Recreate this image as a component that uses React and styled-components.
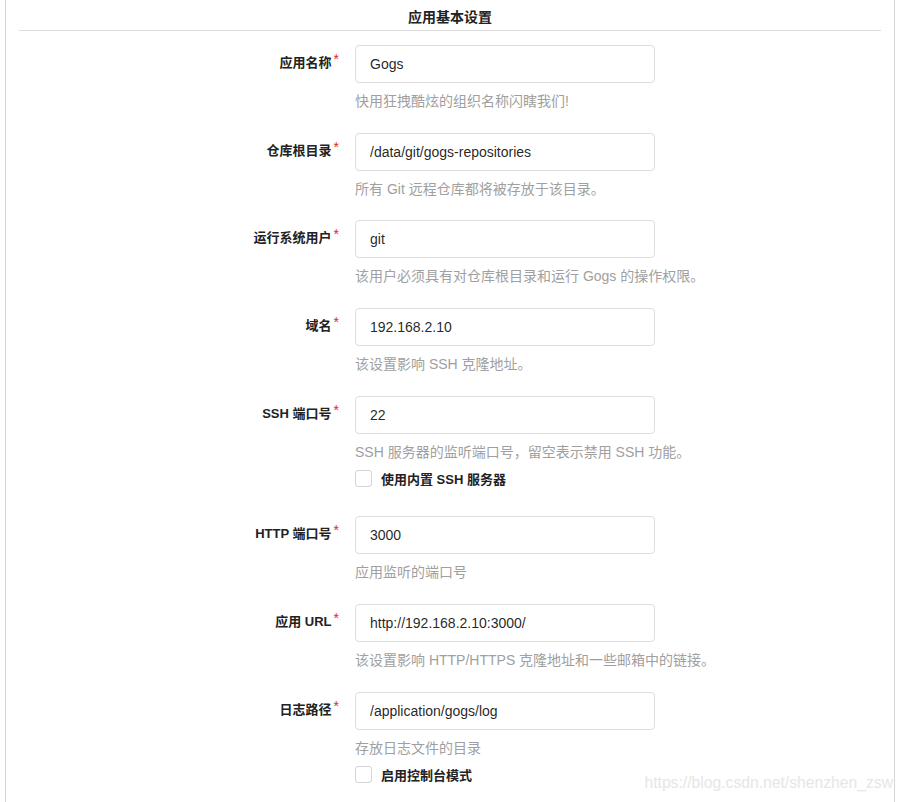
import React from 'react';
import styled, { createGlobalStyle } from 'styled-components';

const GlobalStyle = createGlobalStyle`
  body {
    margin: 0;
    background: #fff;
    font-family: "Liberation Sans", "Noto Sans CJK SC", sans-serif;
    color: rgba(0, 0, 0, 0.87);
  }
`;

const Page = styled.div`
  position: relative;
  height: 802px;
  overflow: hidden;
`;

const Panel = styled.div`
  margin: 0 8px 0 5px;
  border-left: 1px solid #d4d4d5;
  border-right: 1px solid #d4d4d5;
  min-height: 802px;
  padding: 0 13px;
`;

const Title = styled.h3`
  margin: 0;
  height: 30px;
  line-height: 34px;
  text-align: center;
  font-size: 14px;
  font-weight: bold;
  color: #222;
  border-bottom: 1px solid #dcdcdc;
`;

const Form = styled.div`
  padding-top: 14px;
`;

const Field = styled.div`
  display: grid;
  grid-template-columns: 321px 300px;
  column-gap: 15px;
  margin-bottom: ${p => p.$after || 22.7}px;
`;

const Label = styled.label`
  justify-self: end;
  align-self: start;
  padding-top: 7px;
  margin-right: 1px;
  font-size: 13px;
  font-weight: bold;
  color: #222;
  white-space: nowrap;
`;

const Star = styled.span`
  color: #db2828;
  margin-left: 2px;
  font-weight: normal;
  font-size: 14px;
  position: relative;
  top: -3px;
`;

const Control = styled.div`
  display: flex;
  flex-direction: column;
`;

const Input = styled.input`
  box-sizing: border-box;
  width: 300px;
  height: 38px;
  padding: 0 14px;
  border: 1px solid #dedede;
  border-radius: 4px;
  font-family: "Liberation Sans", "Noto Sans CJK SC", sans-serif;
  font-size: 14px;
  color: rgba(0, 0, 0, 0.87);
  outline: none;
`;

const Help = styled.span`
  margin-top: 9px;
  line-height: 18px;
  font-size: 14px;
  color: #a0a0a0;
  white-space: nowrap;
`;

const CheckRow = styled.label`
  display: flex;
  align-items: center;
  gap: 9px;
  margin-top: 8px;
  height: 20px;
  font-size: 13px;
  font-weight: bold;
  color: #222;
  white-space: nowrap;
`;

const Box = styled.span`
  box-sizing: border-box;
  width: 17px;
  height: 17px;
  border: 1px solid #d4d4d5;
  border-radius: 3px;
  background: #fff;
`;

const Watermark = styled.div`
  position: absolute;
  right: 10px;
  bottom: 10px;
  font-family: "Liberation Sans", sans-serif;
  font-size: 15.7px;
  color: #e6e6e6;
`;

const fields = [
  { label: '应用名称', value: 'Gogs', help: '快用狂拽酷炫的组织名称闪瞎我们!' },
  { label: '仓库根目录', value: '/data/git/gogs-repositories', help: '所有 Git 远程仓库都将被存放于该目录。' },
  { label: '运行系统用户', value: 'git', help: '该用户必须具有对仓库根目录和运行 Gogs 的操作权限。' },
  { label: '域名', value: '192.168.2.10', help: '该设置影响 SSH 克隆地址。' },
  { label: 'SSH 端口号', value: '22', help: 'SSH 服务器的监听端口号，留空表示禁用 SSH 功能。', check: '使用内置 SSH 服务器', after: 27.5 },
  { label: 'HTTP 端口号', value: '3000', help: '应用监听的端口号' },
  { label: '应用 URL', value: 'http://192.168.2.10:3000/', help: '该设置影响 HTTP/HTTPS 克隆地址和一些邮箱中的链接。' },
  { label: '日志路径', value: '/application/gogs/log', help: '存放日志文件的目录', check: '启用控制台模式' },
];

export default function App() {
  return (
    <Page>
      <GlobalStyle />
      <Panel>
        <Title>应用基本设置</Title>
        <Form>
          {fields.map(f => (
            <Field key={f.label} $after={f.after}>
              <Label>
                {f.label}
                <Star>*</Star>
              </Label>
              <Control>
                <Input defaultValue={f.value} />
                <Help>{f.help}</Help>
                {f.check && (
                  <CheckRow>
                    <Box />
                    {f.check}
                  </CheckRow>
                )}
              </Control>
            </Field>
          ))}
        </Form>
      </Panel>
      <Watermark>https://blog.csdn.net/shenzhen_zsw</Watermark>
    </Page>
  );
}
